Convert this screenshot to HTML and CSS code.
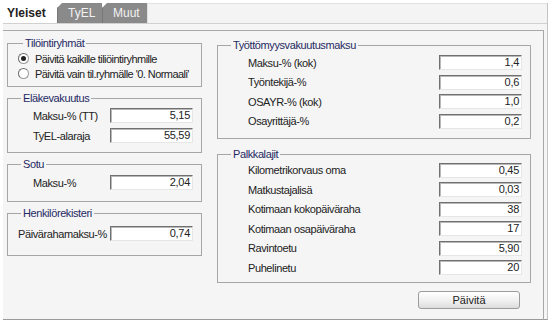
FILE: index.html
```html
<!DOCTYPE html>
<html lang="fi">
<head>
  <meta charset="UTF-8" />
  <title>Yleiset asetukset</title>
  <link rel="stylesheet" href="styles.css">
</head>
<body>
  <div class="window">
    <div class="tabs">
      <div class="tab tab-active">Yleiset</div>
      <div class="tab">TyEL</div>
      <div class="tab">Muut</div>
      <div class="tab-fill"></div>
    </div>

    <div class="panel">
      <div class="col col-left">
        <fieldset class="group g-tili">
          <legend>Tilöintiryhmät</legend>
          <label class="radio-row"><span class="radio checked"></span>Päivitä kaikille tiliöintiryhmille</label>
          <label class="radio-row"><span class="radio"></span>Päivitä vain til.ryhmälle '0. Normaali'</label>
        </fieldset>

        <fieldset class="group g-elake">
          <legend>Eläkevakuutus</legend>
          <div class="row"><span class="lbl">Maksu-% (TT)</span><span class="field">5,15</span></div>
          <div class="row"><span class="lbl">TyEL-alaraja</span><span class="field">55,59</span></div>
        </fieldset>

        <fieldset class="group g-sotu">
          <legend>Sotu</legend>
          <div class="row"><span class="lbl">Maksu-%</span><span class="field">2,04</span></div>
        </fieldset>

        <fieldset class="group g-henk">
          <legend>Henkilörekisteri</legend>
          <div class="row"><span class="lbl lbl-wide">Päivärahamaksu-%</span><span class="field">0,74</span></div>
        </fieldset>
      </div>

      <div class="col col-right">
        <fieldset class="group g-tyott">
          <legend>Työttömyysvakuutusmaksu</legend>
          <div class="row"><span class="lbl">Maksu-% (kok)</span><span class="field">1,4</span></div>
          <div class="row"><span class="lbl">Työntekijä-%</span><span class="field">0,6</span></div>
          <div class="row"><span class="lbl">OSAYR-% (kok)</span><span class="field">1,0</span></div>
          <div class="row"><span class="lbl">Osayrittäjä-%</span><span class="field">0,2</span></div>
        </fieldset>

        <fieldset class="group g-palkka">
          <legend>Palkkalajit</legend>
          <div class="row"><span class="lbl">Kilometrikorvaus oma</span><span class="field">0,45</span></div>
          <div class="row"><span class="lbl">Matkustajalisä</span><span class="field">0,03</span></div>
          <div class="row"><span class="lbl">Kotimaan kokopäiväraha</span><span class="field">38</span></div>
          <div class="row"><span class="lbl">Kotimaan osapäiväraha</span><span class="field">17</span></div>
          <div class="row"><span class="lbl">Ravintoetu</span><span class="field">5,90</span></div>
          <div class="row"><span class="lbl">Puhelinetu</span><span class="field">20</span></div>
        </fieldset>

        <div class="actions">
          <button class="btn">Päivitä</button>
        </div>
      </div>
    </div>
  </div>
</body>
</html>
```

FILE: styles.css
```css
body {
  margin: 0;
  background: #fff;
  font-family: "Liberation Sans", Arial, sans-serif;
  font-size: 11px;
  color: #222;
}
.window {
  margin: 3px 0 0 3px;
  width: 545px;
  height: 317px;
  background: #f5f5f5;
  border-right: 1px solid #c4c4c4;
  border-bottom: 1px solid #9a9a9a;
  box-sizing: border-box;
}
.tabs {
  display: flex;
  height: 20px;
  border-bottom: 1px solid #d0d0d0;
  background: #fff;
}
.tab {
  width: 46px;
  padding-left: 10px;
  box-sizing: border-box;
  background: #8a8a8a;
  color: #f2f2f2;
  font-size: 12px;
  line-height: 20px;
  clip-path: polygon(5px 0, 100% 0, 100% 100%, 0 100%, 0 5px);
  border-left: 1px solid #777;
}
.tab + .tab {
  width: 45px;
}
.tab-active {
  width: 54px;
  padding-left: 4px;
  background: #fff;
  color: #222;
  font-weight: bold;
  clip-path: none;
  border-left: none;
}
.tab-fill {
  flex: 1;
  background: #f4f4f4;
  border-top: 1px solid #e2e2e2;
  border-left: 1px solid #e0e0e0;
}
.panel {
  display: flex;
  gap: 15px;
  margin-top: 6px;
  width: 541px;
  height: 290px;
  box-sizing: border-box;
  padding: 6px 12px 0 4px;
  border-top: 1px solid #a8a8a8;
  border-right: 1px solid #a8a8a8;
}
.col {
  display: flex;
  flex-direction: column;
  gap: 5px;
}
.col-left {
  width: 195px;
}
.col-right {
  width: 314px;
  margin-top: 2px;
  gap: 9px;
}
.group {
  margin: 0;
  padding: 3px 8px 9px 8px;
  border: 1px solid #a6a6a6;
  display: flex;
  flex-direction: column;
  gap: 5px;
}
.group legend {
  margin-left: 5px;
  padding: 0 2px;
  line-height: 13px;
  color: #1f2a63;
  letter-spacing: -0.4px;
}
.g-tili {
  padding: 1px 8px 5px 10px;
  gap: 0;
}
.g-sotu {
  padding-top: 4px;
  padding-bottom: 11px;
}
.g-henk {
  padding-top: 6px;
  padding-bottom: 14px;
}
.g-tyott {
  gap: 4.5px;
}
.g-palkka {
  padding-top: 2px;
  padding-bottom: 7px;
  gap: 4.5px;
}
.radio-row {
  display: flex;
  align-items: center;
  gap: 6px;
  height: 15px;
  white-space: nowrap;
  letter-spacing: -0.55px;
}
.radio {
  flex: none;
  width: 9px;
  height: 9px;
  border-radius: 50%;
  border: 1px solid #9a9a9a;
  border-top-color: #6a6a6a;
  border-left-color: #6a6a6a;
  background: #fff;
  position: relative;
}
.radio.checked::after {
  content: "";
  position: absolute;
  left: 2px;
  top: 2px;
  width: 5px;
  height: 5px;
  border-radius: 50%;
  background: #222;
}
.row {
  display: flex;
  align-items: center;
  height: 15px;
}
.lbl {
  flex: 1;
  padding-left: 17px;
  letter-spacing: -0.4px;
  white-space: nowrap;
}
.lbl-wide {
  padding-left: 2px;
}
.g-tyott .lbl,
.g-palkka .lbl {
  padding-left: 22px;
}
.field {
  width: 83px;
  height: 15px;
  box-sizing: border-box;
  background: #fff;
  border: 1px solid;
  border-color: #707070 #e6e6e6 #e6e6e6 #707070;
  box-shadow: inset 1px 1px 0 #b8b8b8;
  text-align: right;
  padding-right: 2px;
  line-height: 13px;
  letter-spacing: -0.3px;
}
.actions {
  display: flex;
  justify-content: flex-end;
  padding-right: 11px;
  margin-top: -1px;
}
.btn {
  width: 102px;
  height: 18px;
  padding: 0;
  font-family: "Liberation Sans", Arial, sans-serif;
  font-size: 11px;
  color: #222;
  border: 1px solid #9c9c9c;
  border-radius: 3px;
  background: linear-gradient(#ffffff, #eeeeee 60%, #dcdcdc);
}
```
